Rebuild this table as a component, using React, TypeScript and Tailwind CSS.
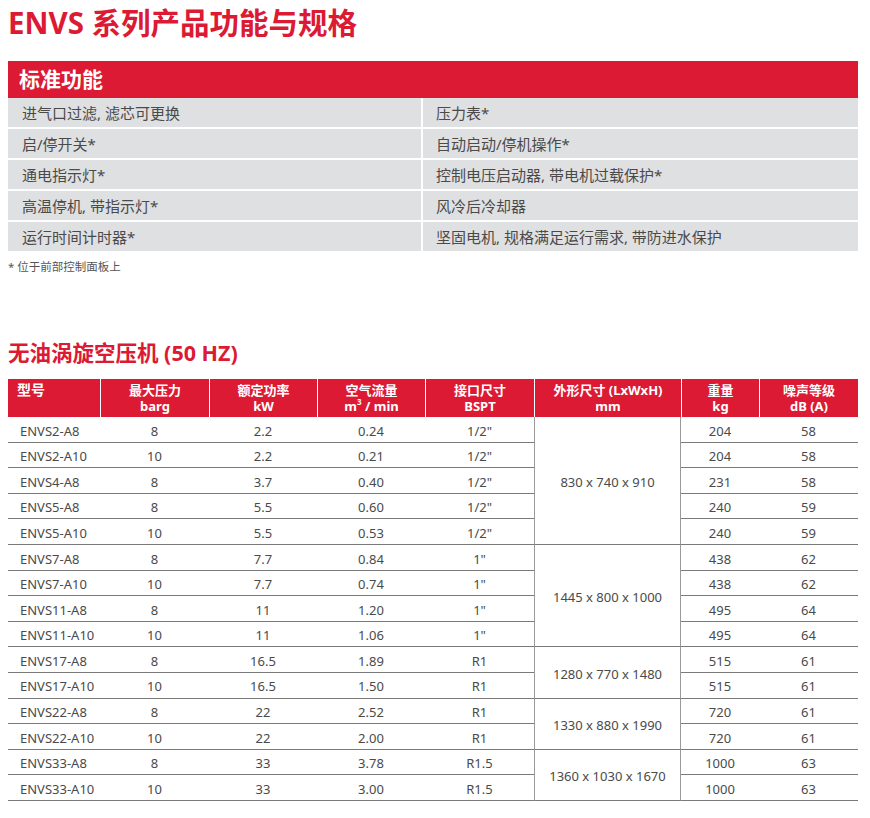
import React from "react";

const features: [string, string][] = [
  ["进气口过滤, 滤芯可更换", "压力表*"],
  ["启/停开关*", "自动启动/停机操作*"],
  ["通电指示灯*", "控制电压启动器, 带电机过载保护*"],
  ["高温停机, 带指示灯*", "风冷后冷却器"],
  ["运行时间计时器*", "坚固电机, 规格满足运行需求, 带防进水保护"],
];

const rows: string[][] = [
  ["ENVS2-A8", "8", "2.2", "0.24", '1/2"', "204", "58"],
  ["ENVS2-A10", "10", "2.2", "0.21", '1/2"', "204", "58"],
  ["ENVS4-A8", "8", "3.7", "0.40", '1/2"', "231", "58"],
  ["ENVS5-A8", "8", "5.5", "0.60", '1/2"', "240", "59"],
  ["ENVS5-A10", "10", "5.5", "0.53", '1/2"', "240", "59"],
  ["ENVS7-A8", "8", "7.7", "0.84", '1"', "438", "62"],
  ["ENVS7-A10", "10", "7.7", "0.74", '1"', "438", "62"],
  ["ENVS11-A8", "8", "11", "1.20", '1"', "495", "64"],
  ["ENVS11-A10", "10", "11", "1.06", '1"', "495", "64"],
  ["ENVS17-A8", "8", "16.5", "1.89", "R1", "515", "61"],
  ["ENVS17-A10", "10", "16.5", "1.50", "R1", "515", "61"],
  ["ENVS22-A8", "8", "22", "2.52", "R1", "720", "61"],
  ["ENVS22-A10", "10", "22", "2.00", "R1", "720", "61"],
  ["ENVS33-A8", "8", "33", "3.78", "R1.5", "1000", "63"],
  ["ENVS33-A10", "10", "33", "3.00", "R1.5", "1000", "63"],
];

const dims: Record<number, { text: string; span: string }> = {
  0: { text: "830 x 740 x 910", span: "row-span-5" },
  5: { text: "1445 x 800 x 1000", span: "row-span-4" },
  9: { text: "1280 x 770 x 1480", span: "row-span-2" },
  11: { text: "1330 x 880 x 1990", span: "row-span-2" },
  13: { text: "1360 x 1030 x 1670", span: "row-span-2" },
};

const cell = "flex items-center justify-center pt-[4px] border-b border-[#7a7a7a]";
const head = "border-l-[1.5px] border-white flex flex-col items-center pt-[3px]";

export default function App() {
  return (
    <div
      className="w-[870px] min-h-[818px] bg-white text-[#4a4a4a]"
      style={{ fontFamily: '"Noto Sans", "Noto Sans CJK SC", sans-serif' }}
    >
      <div className="ml-[8px] w-[850px]">
        <div className="h-[46px] flex items-center">
          <h1 className="text-[29.5px] leading-none font-bold text-[#dc1a33]">ENVS 系列产品功能与规格</h1>
        </div>

        <div className="mt-[15px] h-[37px] bg-[#dc1a33] flex items-center pl-[11px]">
          <span className="text-[21px] font-bold text-white leading-none">标准功能</span>
        </div>
        <div className="grid grid-cols-[413px_1fr] gap-x-[2px] gap-y-[2px]">
          {features.map(([a, b], i) => (
            <React.Fragment key={i}>
              <div className="h-[29px] bg-[#dfe0e1] flex items-center pl-[14px] pt-[1px] text-[15px]">{a}</div>
              <div className="h-[29px] bg-[#dfe0e1] flex items-center pl-[13px] pt-[1px] text-[15px]">{b}</div>
            </React.Fragment>
          ))}
        </div>
        <div className="mt-[8px] text-[11.5px] leading-[16px] text-[#555]">* 位于前部控制面板上</div>

        <h2 className="mt-[64px] text-[21.5px] leading-[28px] font-bold text-[#dc1a33]">无油涡旋空压机 (50 HZ)</h2>

        <div className="mt-[12px] grid grid-cols-[92px_109px_108px_108px_109px_147px_78px_99px] h-[38px] bg-[#dc1a33] text-white font-bold text-[13px] leading-[16px]">
          <div className="pl-[9px] pt-[3px] text-[14px]">型号</div>
          <div className={head}>
            <span>最大压力</span>
            <span>barg</span>
          </div>
          <div className={head}>
            <span>额定功率</span>
            <span>kW</span>
          </div>
          <div className={head}>
            <span>空气流量</span>
            <span>
              m<sup className="text-[8px] top-[-6px]">3</sup> / min
            </span>
          </div>
          <div className={head}>
            <span>接口尺寸</span>
            <span>BSPT</span>
          </div>
          <div className={head}>
            <span>外形尺寸 (LxWxH)</span>
            <span>mm</span>
          </div>
          <div className={head}>
            <span>重量</span>
            <span>kg</span>
          </div>
          <div className={head}>
            <span>噪声等级</span>
            <span>dB (A)</span>
          </div>
        </div>

        <div className="grid grid-cols-[92px_109px_108px_108px_109px_147px_78px_99px] auto-rows-[25.6px] text-[13px]">
          {rows.map((r, i) => (
            <React.Fragment key={i}>
              <div className="flex items-center pl-[12px] pt-[4px] border-b border-[#7a7a7a]">{r[0]}</div>
              <div className={cell}>{r[1]}</div>
              <div className={cell}>{r[2]}</div>
              <div className={cell}>{r[3]}</div>
              <div className={cell}>{r[4]}</div>
              {dims[i] && (
                <div
                  className={`${dims[i].span} col-start-6 flex items-center justify-center pt-[4px] border-b border-b-[#7a7a7a] border-x-[1.5px] border-x-[#9a9a9a]`}
                >
                  {dims[i].text}
                </div>
              )}
              <div className={`${cell} col-start-7`}>{r[5]}</div>
              <div className={cell}>{r[6]}</div>
            </React.Fragment>
          ))}
        </div>
      </div>
    </div>
  );
}
